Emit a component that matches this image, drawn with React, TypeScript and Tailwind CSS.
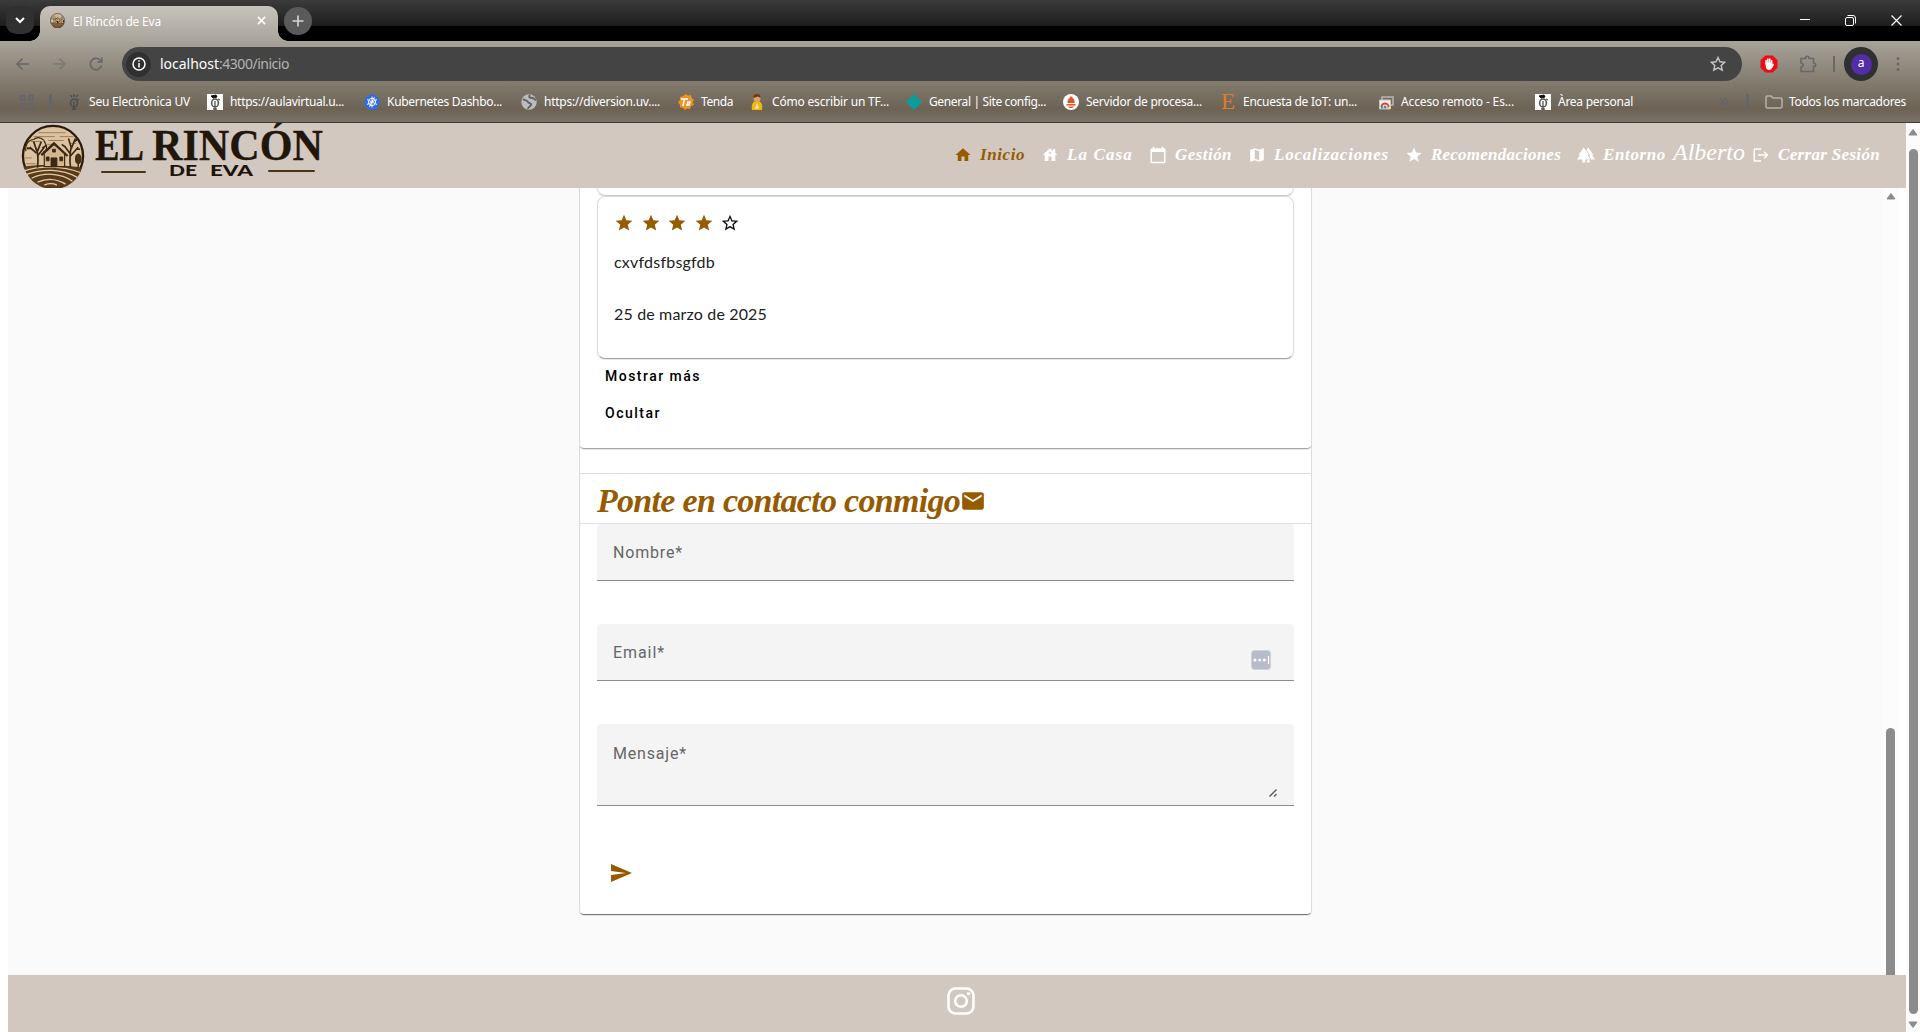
import { useLayoutEffect, useRef, type ReactNode } from "react";
import {
  MdHome, MdHouse, MdCalendarToday, MdMap, MdStar, MdStarBorder, MdForest, MdLogout, MdMail, MdSend,
} from "react-icons/md";

/** Single line of text whose tracking is adjusted so that it fills `w` pixels. */
function Fit({ w, className = "", children }: { w: number; className?: string; children: string }) {
  const ref = useRef<HTMLSpanElement>(null);
  useLayoutEffect(() => {
    const el = ref.current;
    if (!el) return;
    el.style.letterSpacing = "0px";
    const natural = el.getBoundingClientRect().width;
    el.style.letterSpacing = `${(w - natural) / children.length}px`;
  }, [w, children]);
  return (
    <span className="block shrink-0" style={{ width: w }}>
      <span ref={ref} className={`inline-block whitespace-pre ${className}`}>{children}</span>
    </span>
  );
}

function HouseBadge({ className }: { className: string }) {
  return (
    <svg viewBox="0 0 66 66" className={className} fill="none" stroke="#3a2814">
      <circle cx="33" cy="33" r="31" fill="#dcc2a0" stroke="#2a1c0c" strokeWidth="2.4" />
      <g strokeWidth=".8" stroke="#8a6a46">
        <path d="M18 9h28M13 13h22M40 13h14M10 18h10M28 17h16M50 20h7M6 26h5M27 21h8M4 35h7M5 41h10" />
      </g>
      <path d="M2.500 44C18 41 44 42 63 45A31 31 0 0 1 6 51z" fill="#5a3b19" stroke="none" />
      <g stroke="#e2cba9" strokeWidth="1.3">
        <path d="M4 48c16-5 38-5 57 2M6 52c16-6 36-6 52 3M11 56c12-6 30-6 42 3M17 60c9-4 20-4 29 2M24 63c5-2 9-2 13 0" />
      </g>
      <path d="M24 44V30l10-9 11 9v14z" fill="#d5b78f" strokeWidth="1.2" />
      <path d="M21 32l13-12 14 13" strokeWidth="2.4" />
      <path d="M31 44v-9h6v9z" fill="#3a2814" />
      <path d="M26 34h3v4h-3zM40 34h3v4h-3zM32.500 26h3v3h-3z" fill="#3a2814" strokeWidth=".8" />
      <path d="M17 45c1-8 1-13-1-19M16 30l-7-6M17 33l7-9M16 27l-3-9M17 28l4-10M10 25l-4 0M22 25l4-3" strokeWidth="1.800" />
      <path d="M5 28c-1-7 3-12 8-12 5-4 11-1 12 4 3 4 1 8-2 9" strokeWidth="1.200" />
      <path d="M51 45c-1-9-1-14 1-22M51 31l-6-8M51 33l8-9M52 25l-3-10M52 25l4-10M46 24l-4-3M57 26l4 0M54 19l4-3" strokeWidth="1.700" />
      <path d="M59 45V35" strokeWidth="1.500" />
      <ellipse cx="59" cy="36" rx="2.800" ry="5" fill="#4b3017" />
    </svg>
  );
}

function BrandLogo() {
  return (
    <svg viewBox="0 0 320 65" className="block h-[65px] w-[320px] overflow-hidden">
      <g fill="#21160a" fontFamily="'Liberation Serif', serif" fontWeight="700" fontSize="45" stroke="#21160a" strokeWidth=".3">
        <text x="74" y="36.500" textLength="49" lengthAdjust="spacingAndGlyphs">EL</text>
        <text x="131" y="36.500" textLength="171" lengthAdjust="spacingAndGlyphs">RINCÓN</text>
      </g>
      <text x="148" y="53" fontFamily="Lato, sans-serif" fontWeight="900" fontSize="15" fill="#1c130a" textLength="28" lengthAdjust="spacingAndGlyphs">DE</text>
      <text x="189" y="53" fontFamily="Lato, sans-serif" fontWeight="900" fontSize="15" fill="#1c130a" textLength="43" lengthAdjust="spacingAndGlyphs">EVA</text>
      <path d="M81 49h43M248 48h45" stroke="#4d3316" strokeWidth="2" strokeLinecap="round" />
    </svg>
  );
}

const UvMark = ({ boxed }: { boxed?: boolean }) => (
  <svg viewBox="0 0 16 16" className="h-4 w-4" fill="none" stroke={boxed ? "#555" : "#4a4d50"}>
    {boxed && <path d="M0 0h16v16H0z" fill="#fff" stroke="none" />}
    {boxed ? <path d="M4 2l5-1 1 2-4 1z" fill="#111" stroke="#111" /> : <path d="M4 1l2 2M8 0v3M12 1l-2 2" strokeWidth="1.400" />}
    <ellipse cx="8" cy="9" rx="3.400" ry="4" strokeWidth="1.600" />
    <path d="M8 7v9M11 5l2 1M6 15h4" strokeWidth="1.300" />
  </svg>
);
const Kube = () => (
  <svg viewBox="0 0 16 16" className="h-4 w-4" fill="none" stroke="#fff" strokeWidth=".9">
    <path d="M8 0l6 3 2 6-4 6.500H4L0 9l2-6z" fill="#326ce5" stroke="none" />
    <circle cx="8" cy="8" r="3.700" />
    <path d="M8 2.500v11M3 5.500l10 5M13 5.500l-10 5M5.500 13L10.500 3" />
  </svg>
);
const Globe = () => (
  <svg viewBox="0 0 16 16" className="h-4 w-4">
    <circle cx="8" cy="8" r="7.700" fill="#b9bcc1" />
    <path d="M2 5c2 2 4 1 5 3s4 1 3 3-3 2-3 4M9 1c-2 2 0 3 2 3s3 2 4 2" stroke="#66635c" strokeWidth="1.800" fill="none" />
  </svg>
);
const Tenda = () => (
  <svg viewBox="0 0 16 16" className="h-4 w-4">
    <path d="M8 0l2 1.500 3-.5.500 3L16 6l-1.500 2L16 11l-3 1-1 3-3-.500L7 16l-2-2-3-.500L2 11 0 8l2-2V3l3-1z" fill="#f29222" />
    <path d="M3 5h7M6.500 5L5 12M10 8l-1 3h2l1-3z" stroke="#fff" strokeWidth="1.500" fill="none" />
  </svg>
);
const Person = () => (
  <svg viewBox="0 0 16 16" className="h-4 w-4">
    <path d="M3 16c-1-6 1-9 5-9s6 3 5 9z" fill="#f5b50f" />
    <path d="M8 9l2 5-4 1z" fill="#fff2b0" />
    <circle cx="8" cy="4.500" r="3.500" fill="#dba26c" />
    <path d="M4.500 4C4 1 6 0 8 0s4 1 3.500 4L9 2.500z" fill="#6b3c14" />
  </svg>
);
const Diamond = () => (
  <svg viewBox="0 0 16 16" className="h-4 w-4"><path d="M8 .5L15.500 8 8 15.500.5 8z" fill="#0b9d9a" stroke="#0b9d9a" strokeLinejoin="round" /></svg>
);
const Flame = () => (
  <svg viewBox="0 0 16 16" className="h-4 w-4">
    <circle cx="8" cy="8" r="8" fill="#fff" />
    <path d="M8 2c3 3 4 4 3.500 7h-7C4 6 6 5 8 2zM3.500 10h9v1.500h-9zM5 12.500h6c-1 2-5 2-6 0z" fill="#e6522c" />
  </svg>
);
const LetterE = () => <span className="block w-4 text-center font-['Liberation_Serif',serif] text-[23px] leading-4 text-[#e07b28]">E</span>;
const Remote = () => (
  <svg viewBox="0 0 16 16" className="h-4 w-4">
    <path d="M4 3h11v8H4z" fill="none" stroke="#b9b6b0" strokeWidth="1.500" />
    <path d="M1.500 6h11v9h-11z" fill="#eee" stroke="#c6c3bd" />
    <path d="M3.500 13a3.500 3.500 0 0 1 7 0" fill="none" stroke="#db4437" strokeWidth="2" />
    <path d="M9.500 11l1.500 3.500H8.500z" fill="#f4b400" /><path d="M3 11.500l2.500 3H3z" fill="#0f9d58" /><circle cx="7" cy="13" r="1.500" fill="#4285f4" />
  </svg>
);

const bookmarks: { icon: ReactNode; label: string; w: number; gap: string }[] = [
  { icon: <UvMark />, label: "Seu Electrònica UV", w: 101, gap: "ml-0" },
  { icon: <UvMark boxed />, label: "https://aulavirtual.u...", w: 114, gap: "ml-[17px]" },
  { icon: <Kube />, label: "Kubernetes Dashbo...", w: 115, gap: "ml-5" },
  { icon: <Globe />, label: "https://diversion.uv....", w: 116, gap: "ml-[19px]" },
  { icon: <Tenda />, label: "Tenda", w: 32, gap: "ml-[18px]" },
  { icon: <Person />, label: "Cómo escribir un TF...", w: 117, gap: "ml-4" },
  { icon: <Diamond />, label: "General | Site config...", w: 117, gap: "ml-[17px]" },
  { icon: <Flame />, label: "Servidor de procesa...", w: 116, gap: "ml-[17px]" },
  { icon: <LetterE />, label: "Encuesta de IoT: un...", w: 114, gap: "ml-[18px]" },
  { icon: <Remote />, label: "Acceso remoto - Es...", w: 113, gap: "ml-[21px]" },
  { icon: <UvMark boxed />, label: "Àrea personal", w: 75, gap: "ml-[21px]" },
];

function TitleBar() {
  return (
    <div className="flex h-[41px] bg-[linear-gradient(#3b3b3b_0px,#1d1d1d_26px,#000_26px)]">
      <div className="ml-1.5 mt-1.5 flex h-7 w-7 items-center justify-center rounded-[10px] bg-[#303030]">
        <svg viewBox="0 0 10 10" className="h-2.5 w-2.5" fill="none" stroke="#fff" strokeWidth="2"><path d="M1 3l4 4 4-4" /></svg>
      </div>
      <div className="ml-[-4px] flex items-end">
        <div className="h-2.5 w-2.5 bg-[radial-gradient(circle_at_0_0,transparent_9.5px,#aaa59b_10px)]" />
        <div className="flex h-[35px] w-[238px] items-center rounded-t-[10px] bg-[linear-gradient(#c7c2bb,#aaa59b)]">
          <HouseBadge className="-mt-1.5 ml-[10px] h-[15px] w-[15px]" />
          <div className="-mt-1 ml-2 text-xs text-white"><Fit w={88}>El Rincón de Eva</Fit></div>
          <svg viewBox="0 0 10 10" className="-mt-1.5 ml-auto mr-3 h-[9px] w-[9px]" stroke="#fff" strokeWidth="1.800"><path d="M1 1l8 8M9 1l-8 8" /></svg>
        </div>
        <div className="h-2.5 w-2.5 bg-[radial-gradient(circle_at_100%_0,transparent_9.5px,#aaa59b_10px)]" />
      </div>
      <div className="ml-[-4px] mt-[7px] flex h-7 w-7 items-center justify-center rounded-full bg-[#5a5a5a]">
        <svg viewBox="0 0 12 12" className="h-3 w-3" stroke="#d8d8d8" strokeWidth="1.600"><path d="M6 .5v11M.5 6h11" /></svg>
      </div>
      <div className="ml-auto mr-[18px] flex h-10 items-center gap-[35px]">
        <svg viewBox="0 0 10 10" className="h-2.5 w-2.5" stroke="#fff"><path d="M0 4.500h10" /></svg>
        <svg viewBox="0 0 11 11" className="h-[11px] w-[11px]" fill="none" stroke="#fff"><rect x=".5" y="2.500" width="8" height="8" rx="1.500" /><path d="M2.500 .5H8A2.500 2.500 0 0 1 10.500 3v5.500" /></svg>
        <svg viewBox="0 0 11 11" className="h-[11px] w-[11px]" stroke="#fff" strokeWidth="1.200"><path d="M.5.5l10 10M10.500.5l-10 10" /></svg>
      </div>
    </div>
  );
}

function Toolbar() {
  return (
    <div className="h-[82px] border-b border-[#3c3c3c] bg-[linear-gradient(#a8a399_0px,#847d70_39px,#6c6355_68px,#7a7266_81px)]">
      <div className="flex h-[46px] items-center">
        <svg viewBox="0 0 16 16" className="ml-[15px] h-4 w-4" fill="none" stroke="#68686a" strokeWidth="1.600"><path d="M14 8H2M7.500 2.500L2 8l5.500 5.500" /></svg>
        <svg viewBox="0 0 16 16" className="ml-5 h-4 w-4" fill="none" stroke="#7b7975" strokeWidth="1.600"><path d="M2 8h12M8.500 2.500L14 8l-5.500 5.500" /></svg>
        <svg viewBox="0 0 16 16" className="ml-[21px] h-4 w-4" fill="none" stroke="#68686a" strokeWidth="1.700"><path d="M13.500 9.500A5.700 5.700 0 1 1 12 4l1.500 1.500M13.800 1.500v4.300H9.500" /></svg>
        <div className="ml-[18px] flex h-[34px] w-[1620px] items-center rounded-full bg-[#444]">
          <div className="ml-1 flex h-[25px] w-[25px] items-center justify-center rounded-full bg-[#303030]">
            <svg viewBox="0 0 14 14" className="h-3.5 w-3.5" fill="none" stroke="#fff" strokeWidth="1.500"><circle cx="7" cy="7" r="6" /><path d="M7 6v4.500M7 3.300v1.500" /></svg>
          </div>
          <div className="ml-[9px] flex text-sm">
            <Fit w={59} className="text-white">localhost</Fit>
            <Fit w={70} className="text-[#b5b3b0]">:4300/inicio</Fit>
          </div>
          <svg viewBox="0 0 16 16" className="ml-auto mr-4 h-4 w-4" fill="none" stroke="#c9c7c4" strokeWidth="1.400"><path d="M8 1.500l2 4.300 4.700.5-3.500 3.200 1 4.700L8 11.800l-4.200 2.400 1-4.700L1.300 6.300 6 5.800z" /></svg>
        </div>
        <svg viewBox="0 0 18 18" className="ml-[18px] h-[18px] w-[18px]">
          <path d="M5.300.5h7.400l4.800 4.800v7.400l-4.800 4.800H5.300L.5 12.700V5.300z" fill="#ed0c14" />
          <path d="M6 8.500V5.500M7.900 8V4M9.800 8V4M11.700 8V5.500M13.200 9.500l-1.500 2.500" stroke="#fff" strokeWidth="1.500" strokeLinecap="round" />
          <path d="M5.300 7.500h7.100V11c0 4.500-5 5-6.400 2z" fill="#fff" />
        </svg>
        <svg viewBox="0 0 18 18" className="ml-[21px] h-[18px] w-[18px]" fill="none" stroke="#68686a" strokeWidth="1.600"><path d="M2 3.500h4.500c0-3 3.500-3 3.500 0h4.500V8c3 0 3 3.500 0 3.500v5H2v-4.500c3-.5 3-3.500 0-4z" /></svg>
        <div className="ml-4 h-4 w-0.5 bg-[#68686a]" />
        <div className="ml-[9px] flex h-[34px] w-[34px] items-center justify-center rounded-full bg-[#303030]">
          <div className="flex h-[21px] w-[21px] items-center justify-center rounded-full bg-[#512da8] pb-0.5 text-xs text-white">a</div>
        </div>
        <svg viewBox="0 0 4 16" className="ml-[18px] h-4 w-1" fill="#68686a"><circle cx="2" cy="2.500" r="1.500" /><circle cx="2" cy="8" r="1.500" /><circle cx="2" cy="13.500" r="1.500" /></svg>
      </div>
      <div className="flex h-[30px] items-center text-xs text-white">
        <svg viewBox="0 0 16 16" className="ml-[19px] h-4 w-4" fill="none" stroke="#62656c" strokeWidth="1.500"><path d="M1.500 1.500h4v4h-4zM10 1.500h4v4h-4zM1.500 10h4v4h-4zM10 10h4v4h-4z" /></svg>
        <div className="ml-3.5 mr-[14px] h-4 w-[3px] bg-[#62656c]" />
        {bookmarks.map((b) => (
          <div key={b.label} className={`flex shrink-0 items-center gap-[7px] ${b.gap}`}>
            {b.icon}
            <Fit w={b.w}>{b.label}</Fit>
          </div>
        ))}
        <svg viewBox="0 0 10 8" className="ml-auto h-2 w-2.5" fill="none" stroke="#62656c" strokeWidth="1.500"><path d="M1 .5L4.500 4 1 7.500M5.500.5L9 4 5.500 7.500" /></svg>
        <div className="ml-[17px] h-4 w-[3px] bg-[#62656c]" />
        <svg viewBox="0 0 18 14" className="ml-4 h-3.5 w-[18px]" fill="none" stroke="#b5b1a9" strokeWidth="1.600"><path d="M1 2.500Q1 1 2.500 1H6l2 2h7.500Q17 3 17 4.500v7q0 1.500-1.500 1.500h-13Q1 13 1 11.500z" /></svg>
        <div className="ml-1.5 mr-[14px]"><Fit w={117}>Todos los marcadores</Fit></div>
      </div>
    </div>
  );
}

const script = "font-['Liberation_Serif',serif] italic";

function NavItem({ icon, label, w, gap, active }: { icon: ReactNode; label: string; w: number; gap: string; active?: boolean }) {
  return (
    <a className={`flex items-center gap-2 text-[17px] leading-6 font-bold ${script} ${gap} ${active ? "text-[#965b00]" : "text-white"}`}>
      <span className="text-[18px]">{icon}</span>
      <Fit w={w}>{label}</Fit>
    </a>
  );
}

function SiteHeader() {
  return (
    <header className="flex h-[65px] w-[1906px] bg-[#d3c8bf]">
      <HouseBadge className="ml-[21px] mt-px h-[64px] w-[66px] -translate-x-px" />
      <div className="ml-[-66px] w-[320px]"><BrandLogo /></div>
      <nav className="ml-auto mr-[26px] flex h-16 items-center">
        <NavItem icon={<MdHome />} label="Inicio" w={45} gap="" active />
        <NavItem icon={<MdHouse />} label="La Casa" w={66} gap="ml-4" />
        <NavItem icon={<MdCalendarToday />} label="Gestión" w={57} gap="ml-4" />
        <NavItem icon={<MdMap />} label="Localizaciones" w={115} gap="ml-4" />
        <NavItem icon={<MdStar />} label="Recomendaciones" w={130} gap="ml-4" />
        <NavItem icon={<MdForest />} label="Entorno" w={63} gap="ml-4" />
        <div className={`mb-1.5 ml-[7px] text-2xl leading-6 text-white ${script}`}><Fit w={72}>Alberto</Fit></div>
        <NavItem icon={<MdLogout />} label="Cerrar Sesión" w={102} gap="ml-[7px]" />
      </nav>
    </header>
  );
}

function Field({ label, w, className, children }: { label: string; w: number; className: string; children?: ReactNode }) {
  return (
    <div className={`relative rounded-t border-b border-[#8c8c8c] bg-[#f4f4f4] pl-4 font-[Roboto,sans-serif] text-base text-[#666] ${className}`}>
      <Fit w={w}>{label}</Fit>
      {children}
    </div>
  );
}

const cardShadow = "border border-[#dcdcdc] shadow-[0_1px_1px_rgba(0,0,0,.1)]";

function Content() {
  return (
    <main className="ml-2 flex h-[787px] w-[1898px] overflow-hidden bg-[#fafafa]">
      <div className="ml-[571px] w-[733px] shrink-0">
        <div className="h-[285px] border-x border-[#dedede] bg-white">
          <section className={`ml-[-1px] h-[261px] w-[733px] rounded-b-[5px] !border-t-0 !border-b-[#a5a5a5] bg-white px-[17px] ${cardShadow}`}>
            <div className={`h-2 rounded-b-lg !border-t-0 !border-b-[#c8c8c8] ${cardShadow}`} />
            <article className={`flex h-[163px] flex-col rounded-lg !border-b-[#a5a5a5] bg-white pl-4 pt-4 font-[Lato,sans-serif] text-[16px] leading-6 text-[#212121] ${cardShadow}`}>
              <div className="flex gap-[6.5px] text-xl text-[#965b00]">
                <MdStar /><MdStar /><MdStar /><MdStar /><MdStarBorder className="text-[#111]" />
              </div>
              <div className="mt-[17px]"><Fit w={101}>cxvfdsfbsgfdb</Fit></div>
              <div className="mt-7"><Fit w={153}>25 de marzo de 2025</Fit></div>
            </article>
            <div className="-mt-px flex flex-col pl-2 font-[Roboto,sans-serif] text-sm font-medium leading-[37px] text-black">
              <Fit w={96}>Mostrar más</Fit>
              <Fit w={56}>Ocultar</Fit>
            </div>
          </section>
        </div>
        <section className={`h-[442px] rounded-b-[5px] !border-b-[#777] bg-white ${cardShadow}`}>
          <h2 className={`flex h-[50px] items-center border-b border-[#dedede] pl-[17px] text-[34px] font-bold text-[#965b00] ${script}`}>
            <Fit w={363} className="pt-2 leading-[42px]">Ponte en contacto conmigo</Fit>
            <MdMail className="mt-1 text-[26px]" />
          </h2>
          <form className="px-[17px]">
            <Field label="Nombre*" w={70} className="h-[57px] pt-[17px]" />
            <Field label="Email*" w={52} className="mt-[43px] h-[57px] pt-[17px]">
              <svg viewBox="0 0 20 20" className="absolute right-[23px] top-[26px] h-5 w-5">
                <rect x=".5" y=".5" width="19" height="19" rx="3" fill="#b6bdc8" stroke="#cdd2d9" />
                <path d="M17.500 6v8" stroke="#fff" strokeWidth="1.200" />
                <g fill="#fff"><circle cx="4" cy="10" r="1.500" /><circle cx="8.700" cy="10" r="1.500" /><circle cx="13.400" cy="10" r="1.500" /></g>
              </svg>
            </Field>
            <Field label="Mensaje*" w={74} className="mt-[43px] h-[82px] pt-[18px]">
              <svg viewBox="0 0 8 8" className="absolute bottom-2 right-[17px] h-2 w-2" stroke="#555" strokeWidth="1.300"><path d="M.5 7.500l7-7M5 7.500L7.500 5" /></svg>
            </Field>
            <button type="button" className="ml-3 mt-[55px] block text-2xl text-[#965b00]"><MdSend /></button>
          </form>
        </section>
      </div>
      <div className="ml-auto mr-2 flex w-[15px] flex-col items-center bg-[#fcfcfc]">
        <svg viewBox="0 0 10 8" className="mt-1 h-2 w-2.5 shrink-0"><path d="M1 7L5 1.500 9 7z" fill="#8b8b8b" stroke="#8b8b8b" strokeLinejoin="round" /></svg>
        <div className="mt-[528px] h-[247px] w-[9px] shrink-0 rounded-t-full bg-[#8b8b8b]" />
      </div>
      <div className="-ml-2 w-2 bg-white" />
    </main>
  );
}

export default function App() {
  return (
    <div className="flex h-[1032px] w-[1920px] flex-col overflow-hidden bg-white font-['Noto_Sans',sans-serif]">
      <TitleBar />
      <Toolbar />
      <div className="flex h-[909px]">
        <div className="w-[1906px]">
          <SiteHeader />
          <Content />
          <footer className="ml-2 flex h-[57px] justify-center bg-[#d3c8bf]">
            <svg viewBox="0 0 28 28" className="ml-2 mt-3 h-7 w-7" fill="none" stroke="#fff" strokeWidth="2.600">
              <rect x="1.500" y="1.500" width="25" height="25" rx="7" />
              <circle cx="14" cy="14" r="5.800" />
              <circle cx="21.500" cy="6.600" r="1.700" fill="#fff" stroke="none" />
            </svg>
          </footer>
        </div>
        <div className="flex w-3.5 flex-col items-center bg-[#fcfcfc]">
          <svg viewBox="0 0 10 8" className="mt-[5px] h-2 w-2.5 shrink-0"><path d="M1 7L5 1.500 9 7z" fill="#8b8b8b" stroke="#8b8b8b" strokeLinejoin="round" /></svg>
          <div className="mt-[13px] h-[865px] w-[9px] shrink-0 rounded-full bg-[#8b8b8b]" />
          <svg viewBox="0 0 10 8" className="mt-[7px] h-2 w-2.5 shrink-0"><path d="M1 1L5 6.500 9 1z" fill="#8b8b8b" stroke="#8b8b8b" strokeLinejoin="round" /></svg>
        </div>
      </div>
    </div>
  );
}
